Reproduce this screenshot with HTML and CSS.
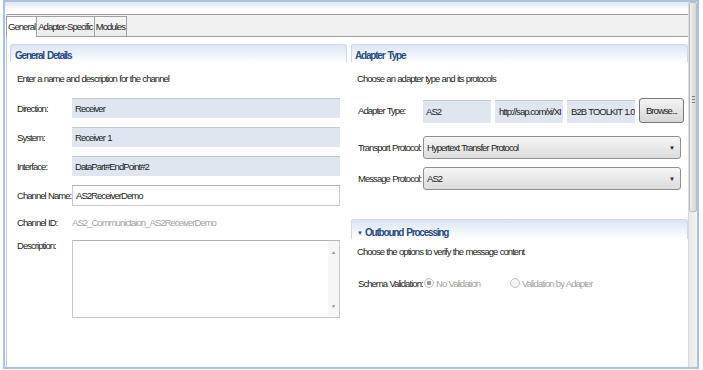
FILE: index.html
```html
<!DOCTYPE html>
<html lang="en">
<head>
    <!-- Meta Tags -->
    <meta charset="UTF-8">
    <meta name="viewport" content="width=device-width, initial-scale=1.0">
    <title>Communication Channel - AS2ReceiverDemo</title>

    <!-- Styles -->
    <link rel="stylesheet" href="styles.css">
</head>
<body>

<div class="window">
    <div class="main">
        <div class="top-band"></div>

        <div class="folder">
            <!-- Tabs -->
            <div class="tabs">
                <div class="tab active">General</div>
                <div class="tab">Adapter-Specific</div>
                <div class="tab">Modules</div>
            </div>

            <div class="content">
                <!-- General Details -->
                <div class="section general">
                    <div class="section-header">General Details</div>
                    <p class="section-desc">Enter a name and description for the channel</p>

                    <div class="form">
                        <div class="row">
                            <span class="label">Direction:</span>
                            <div class="field readonly">Receiver</div>
                        </div>
                        <div class="row">
                            <span class="label">System:</span>
                            <div class="field readonly">Receiver 1</div>
                        </div>
                        <div class="row">
                            <span class="label">Interface:</span>
                            <div class="field readonly">DataPart#EndPoint#2</div>
                        </div>
                        <div class="row">
                            <span class="label">Channel Name:</span>
                            <div class="field editable">AS2ReceiverDemo</div>
                        </div>
                        <div class="row id-row">
                            <span class="label">Channel ID:</span>
                            <span class="value disabled">AS2_Communictaion_AS2ReceiverDemo</span>
                        </div>
                        <div class="row desc-row">
                            <span class="label">Description:</span>
                            <div class="textarea">
                                <div class="textarea-scroll">
                                    <span class="arrow">&#9650;</span>
                                    <span class="arrow">&#9660;</span>
                                </div>
                            </div>
                        </div>
                    </div>
                </div>

                <div class="column">
                    <!-- Adapter Type -->
                    <div class="section adapter">
                        <div class="section-header">Adapter Type</div>
                        <p class="section-desc">Choose an adapter type and its protocols</p>

                        <div class="form">
                            <div class="row adapter-row">
                                <span class="label">Adapter Type:</span>
                                <div class="field readonly small">AS2</div>
                                <div class="field readonly small">http://sap.com/xi/XI</div>
                                <div class="field readonly small">B2B TOOLKIT 1.0</div>
                                <button class="browse">Browse...</button>
                            </div>
                            <div class="row select-row">
                                <span class="label">Transport Protocol:</span>
                                <div class="select">
                                    <span>Hypertext Transfer Protocol</span>
                                    <span class="caret">&#9660;</span>
                                </div>
                            </div>
                            <div class="row select-row">
                                <span class="label">Message Protocol:</span>
                                <div class="select">
                                    <span>AS2</span>
                                    <span class="caret">&#9660;</span>
                                </div>
                            </div>
                        </div>
                    </div>

                    <!-- Outbound Processing -->
                    <div class="section outbound">
                        <div class="section-header"><span class="twisty">&#9660;</span>Outbound Processing</div>
                        <p class="section-desc">Choose the options to verify the message content</p>

                        <div class="row radio-row">
                            <span class="label">Schema Validation:</span>
                            <span class="radio checked"></span>
                            <span class="radio-text">No Validation</span>
                            <span class="radio second"></span>
                            <span class="radio-text">Validation by Adapter</span>
                        </div>
                    </div>
                </div>
            </div>
        </div>
    </div>

    <!-- Scrollbar -->
    <div class="scrollbar">
        <div class="thumb">
            <span class="grip"></span>
        </div>
    </div>
</div>

</body>
</html>
```

FILE: styles.css
```css
/* Global Reset */
*, *::before, *::after {
    margin: 0;
    padding: 0;
    box-sizing: border-box;
}

/* Root Variables */
:root {
    --frame-color: #a9c2e2;
    --tab-border: #a0a0a0;
    --title-color: #1f4b88;
    --label-color: #222222;
    --disabled-color: #a2a2a2;
    --readonly-bg: #dfe6ef;
}

/* Body Styling */
body {
    width: 703px;
    height: 370px;
    overflow: hidden;
    background-color: #fff;
    font-family: 'Liberation Sans', Arial, sans-serif;
    font-size: 9.5px;
    letter-spacing: -0.95px;
    word-spacing: 0.6px;
    color: var(--label-color);
}

/* Window Frame */
.window {
    display: flex;
    width: 696px;
    height: 369px;
    margin-left: 3px;
    border: 2px solid var(--frame-color);
}

.main {
    flex: 1;
    display: flex;
    flex-direction: column;
}

.top-band {
    height: 12px;
    background-image: linear-gradient(#dbe6f5, #ffffff 65%);
}

.folder {
    flex: 1;
    display: flex;
    flex-direction: column;
    margin-left: 1px;
    border-left: 1px solid #c4c4c4;
}

/* Tabs */
.tabs {
    display: flex;
    align-items: flex-end;
    height: 23px;
    background-color: #f0f0f0;
    border-top: 1px solid var(--tab-border);
    border-bottom: 1px solid var(--tab-border);
}

.tab {
    height: 20px;
    padding: 0 1px;
    line-height: 20px;
    border: 1px solid var(--tab-border);
    border-bottom: none;
    margin-right: -1px;
    background-image: linear-gradient(#f7f7f7, #ebebeb);
}

.tab.active {
    height: 21px;
    margin-left: -1px;
    margin-bottom: -1px;
    background: #fff;
    position: relative;
    z-index: 1;
}

/* Content */
.content {
    flex: 1;
    display: flex;
    gap: 4px;
    padding: 7px 0 0 3px;
}

.section {
    width: 337px;
}

.column {
    width: 337px;
}

.section-header {
    height: 18px;
    padding: 4px 0 0 4px;
    line-height: 14px;
    font-size: 10px;
    font-weight: bold;
    letter-spacing: -1.2px;
    word-spacing: 1.5px;
    color: var(--title-color);
    border: 1px solid #ccd9eb;
    border-bottom: none;
    border-radius: 3px 3px 0 0;
    background-image: linear-gradient(#dae5f3, #ffffff);
}

.adapter .section-header {
    padding-left: 3px;
}

.section-desc {
    margin-top: 10px;
    padding-left: 7px;
    line-height: 14px;
}

.adapter .section-desc,
.outbound .section-desc {
    padding-left: 6px;
}

/* Form Rows */
.form {
    margin-top: 12px;
    padding-left: 7px;
}

.row {
    display: flex;
    align-items: center;
    height: 20px;
    margin-bottom: 9px;
}

.label {
    width: 55px;
    flex-shrink: 0;
    white-space: nowrap;
}

.field {
    width: 268px;
    height: 20px;
    padding-left: 3px;
    line-height: 19px;
    white-space: nowrap;
    overflow: hidden;
}

.field.readonly {
    background-color: var(--readonly-bg);
    border-top: 1px solid #c3cad3;
}

.field.editable {
    height: 21px;
    border: 1px solid #c6ccd3;
    border-top-color: #abb2ba;
    background-color: #fff;
}

.id-row {
    height: 16px;
    margin-bottom: 10px;
}

.value.disabled {
    color: var(--disabled-color);
}

.desc-row {
    align-items: flex-start;
    height: 78px;
}

.desc-row .label {
    line-height: 11px;
}

.textarea {
    display: flex;
    justify-content: flex-end;
    width: 268px;
    height: 78px;
    border: 1px solid #c3c9d0;
    border-top-color: #aeb5bd;
}

.textarea-scroll {
    display: flex;
    flex-direction: column;
    justify-content: space-between;
    align-items: center;
    width: 11px;
    padding: 8px 0 8px;
    background-color: #f6f6f6;
}

.arrow {
    font-size: 5px;
    letter-spacing: 0;
    color: #8a8a8a;
}

/* Adapter Type */
.adapter .label,
.outbound .label {
    width: 65px;
}

.adapter-row {
    height: 25px;
    margin-bottom: 13px;
}

.field.small {
    width: 68px;
    height: 23px;
    margin-top: 2px;
    padding-left: 3px;
    line-height: 22px;
    text-overflow: clip;
}

.field.small + .field.small {
    margin-left: 4px;
    padding-left: 4px;
}

.field.small:nth-of-type(2) {
    margin-left: 3px;
}

.browse {
    width: 45px;
    height: 25px;
    margin-left: 4px;
    font-family: inherit;
    font-size: 9.5px;
    letter-spacing: -0.95px;
    color: #222;
    border: 1px solid #777;
    border-radius: 3px;
    background-image: linear-gradient(#f4f4f4, #e4e4e4 50%, #d6d6d6);
}

.select-row {
    height: 23px;
    margin-bottom: 8px;
}

.select {
    display: flex;
    justify-content: space-between;
    align-items: center;
    width: 258px;
    height: 23px;
    padding: 0 5px 0 3px;
    color: #222;
    border: 1px solid #8f8f8f;
    border-radius: 3px;
    background-image: linear-gradient(#f6f6f6, #e9e9e9 50%, #dcdcdc);
}

.caret {
    font-size: 6px;
    letter-spacing: 0;
    color: #222;
}

/* Outbound Processing */
.outbound {
    margin-top: 29px;
}

.outbound .section-header {
    height: 20px;
    padding: 6px 0 0 5px;
}

.twisty {
    display: inline-block;
    width: 8px;
    font-size: 6px;
    letter-spacing: 0;
    vertical-align: top;
}

.outbound .section-desc {
    margin-top: 6px;
}

.radio-row {
    height: 16px;
    margin-top: 16px;
    padding-left: 7px;
}

.radio {
    width: 10px;
    height: 10px;
    margin: 0 2px 0 1px;
    border: 1px solid #c2c2c2;
    border-radius: 50%;
    background-color: #f4f4f4;
}

.radio.checked {
    background-image: radial-gradient(circle, #9a9a9a 0 2px, #f4f4f4 2.5px);
}

.radio.second {
    margin-left: 30px;
}

.radio-text {
    color: var(--disabled-color);
}

/* Scrollbar */
.scrollbar {
    width: 9px;
    background-image: linear-gradient(to right, #e8e8e8, #f3f3f3);
    border-left: 1px solid #dadada;
}

.thumb {
    display: flex;
    align-items: center;
    justify-content: center;
    height: 210px;
    border: 1px solid #bdbdbd;
    border-radius: 2px;
    background-image: linear-gradient(to right, #eeeeee, #d6d6d6);
}

.grip {
    width: 3px;
    height: 7px;
    margin-top: -16px;
    background-image: repeating-linear-gradient(#7a7a7a 0 1px, transparent 1px 3px);
}
```
